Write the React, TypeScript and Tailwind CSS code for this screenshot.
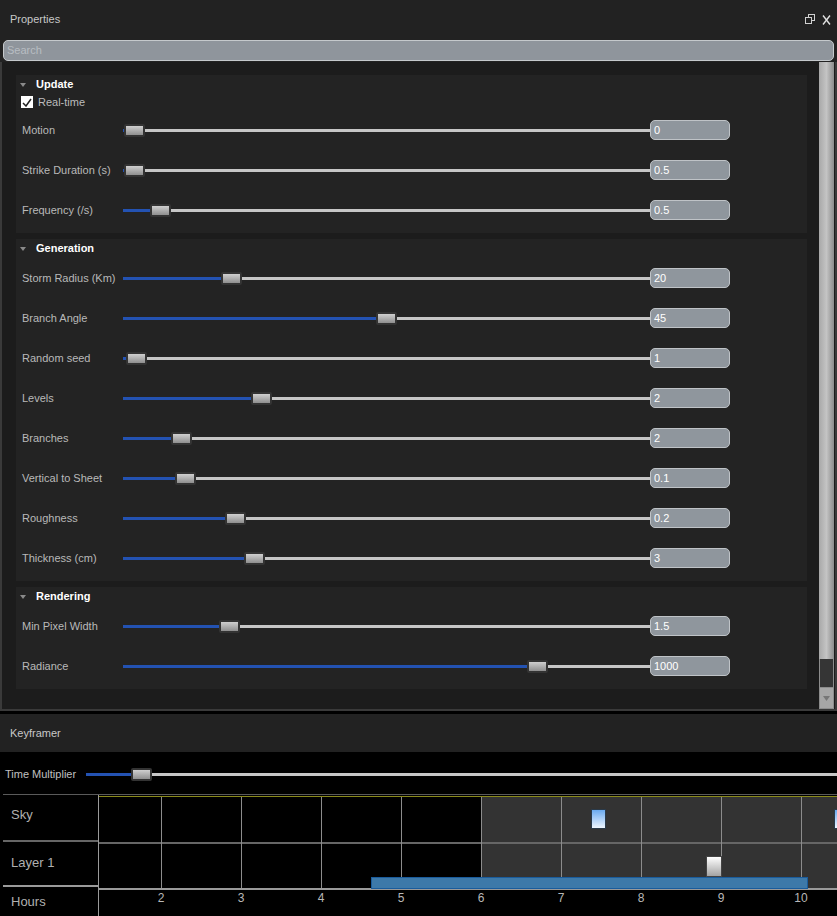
import React from "react";

// One slider row in the properties panel
interface Row {
  label: string;
  value: string;
  thumb: number; // left offset of the thumb in px
}

const updateRows: Row[] = [
  { label: "Motion", value: "0", thumb: 1 },
  { label: "Strike Duration (s)", value: "0.5", thumb: 1 },
  { label: "Frequency (/s)", value: "0.5", thumb: 27 },
];

const generationRows: Row[] = [
  { label: "Storm Radius (Km)", value: "20", thumb: 98 },
  { label: "Branch Angle", value: "45", thumb: 253 },
  { label: "Random seed", value: "1", thumb: 3 },
  { label: "Levels", value: "2", thumb: 128 },
  { label: "Branches", value: "2", thumb: 48 },
  { label: "Vertical to Sheet", value: "0.1", thumb: 52 },
  { label: "Roughness", value: "0.2", thumb: 102 },
  { label: "Thickness (cm)", value: "3", thumb: 121 },
];

const renderingRows: Row[] = [
  { label: "Min Pixel Width", value: "1.5", thumb: 96 },
  { label: "Radiance", value: "1000", thumb: 404 },
];

const hours = [2, 3, 4, 5, 6, 7, 8, 9, 10];

function Slider({ thumb, width }: { thumb: number; width: number }) {
  return (
    <div className="relative h-[13px] shrink-0" style={{ width }}>
      <div className="absolute left-0 right-0 top-[5px] h-[3px] bg-[#c6c6c6]" />
      <div
        className="absolute left-0 top-[5px] h-[3px] bg-[#2352b2]"
        style={{ width: thumb + 2 }}
      />
      <div
        className="absolute top-0 h-[13px] w-[21px] rounded-[2px] border-2 border-[#333] bg-gradient-to-b from-[#cfcfcf] to-[#8f8f8f]"
        style={{ left: thumb }}
      />
    </div>
  );
}

function SliderRow({ row }: { row: Row }) {
  return (
    <div className="h-[40px] flex items-center pl-[6px]">
      <div className="w-[101px] text-[11px] text-[#b9b9b9]">{row.label}</div>
      <Slider thumb={row.thumb} width={527} />
      <div className="w-[80px] h-[20px] rounded-[5px] bg-[#8f969d] border border-[#bfc3c7] flex items-center pl-[3px] text-[11px] text-white">
        {row.value}
      </div>
    </div>
  );
}

function Section({
  title,
  rows,
  children,
}: {
  title: string;
  rows: Row[];
  children?: React.ReactNode;
}) {
  return (
    <div className="bg-[#232323] pb-[3px]">
      <div className="h-[19px] flex items-center pl-[4px]">
        <svg width="6" height="4" viewBox="0 0 6 4" className="mr-[10px]">
          <path d="M0 0H6L3 4Z" fill="#8a8a8a" />
        </svg>
        <span className="text-[11px] font-bold text-white">{title}</span>
      </div>
      {children}
      {rows.map((r) => (
        <SliderRow key={r.label} row={r} />
      ))}
    </div>
  );
}

export default function App() {
  return (
    <div className="w-[837px] h-[916px] bg-black flex flex-col overflow-hidden font-['Liberation_Sans',Arial,sans-serif]">
      {/* Properties panel */}
      <div className="h-[711px] shrink-0 bg-[#222] flex flex-col">
        <div className="h-[39px] flex items-center px-[10px] text-[11px] text-[#c8c8c8]">
          <span className="flex-1">Properties</span>
          <svg width="11" height="11" viewBox="0 0 11 11" className="mr-[6px]">
            <rect x="3.5" y="0.5" width="6" height="6" fill="none" stroke="#d0d0d0" />
            <rect x="0.5" y="3.5" width="6" height="6" fill="#222" stroke="#d0d0d0" />
          </svg>
          <svg width="9" height="10" viewBox="0 0 9 10" className="mr-[-4px]">
            <path d="M1 0.5L8 9.5M8 0.5L1 9.5" stroke="#e0e0e0" strokeWidth="1.4" />
          </svg>
        </div>
        <div className="mx-[3px] mt-px h-[21px] rounded-[5px] bg-[#8f959c] border border-[#c5c9cc] flex items-center pl-[3px] text-[11px] text-[#b8bdc2]">
          Search
        </div>
        <div className="flex-1 flex bg-[#1c1c1c] border-x-2 border-b-2 border-[#3a3a3a] mt-px">
          <div className="flex-1 flex flex-col gap-[6px] pt-[13px] pl-[14px] pr-[12px]">
            <Section title="Update" rows={updateRows}>
              <div className="h-[16px] flex items-center pl-[5px] text-[11px] text-[#bcbcbc]">
                <div className="w-[12px] h-[12px] bg-white mr-[5px] flex items-center justify-center">
                  <svg width="10" height="9" viewBox="0 0 10 9">
                    <path d="M1 5L4 8L9 1" fill="none" stroke="#222" strokeWidth="1.5" />
                  </svg>
                </div>
                Real-time
              </div>
            </Section>
            <Section title="Generation" rows={generationRows} />
            <Section title="Rendering" rows={renderingRows} />
          </div>
          {/* Scrollbar */}
          <div className="w-[15px] flex flex-col mr-px">
            <div className="flex-1 bg-gradient-to-r from-[#a8a8a8] via-[#c4c4c4] to-[#8c8c8c]" />
            <div className="h-[28px] bg-[#353535] border-x border-[#8c8c8c]" />
            <div className="h-[22px] bg-[#a6a6a6] border border-[#8c8c8c] flex items-center justify-center">
              <svg width="7" height="5" viewBox="0 0 7 5">
                <path d="M0 0H7L3.5 5Z" fill="#777" />
              </svg>
            </div>
          </div>
        </div>
      </div>

      {/* Keyframer */}
      <div className="mt-[3px] h-[38px] shrink-0 bg-[#222] flex items-center px-[10px] text-[11px] text-[#c8c8c8]">
        Keyframer
      </div>
      <div className="flex-1 flex flex-col">
        <div className="h-[43px] flex items-center pt-[2px] pl-[2px] border-b border-[#5a5a5a] ml-[3px] overflow-hidden">
          <span className="w-[81px] shrink-0 text-[11px] text-[#c0c0c0]">Time Multiplier</span>
          <Slider thumb={45} width={760} />
        </div>
        <div className="flex-1 flex ml-[3px]">
          <div className="w-[96px] flex flex-col border-r border-[#9a9a9a] text-[13px] text-[#b0b0b0]">
            <div className="h-[47px] pl-[8px] pt-[10px] border-b-2 border-[#666]">Sky</div>
            <div className="h-[45px] pl-[8px] pt-[11px] border-b-2 border-[#9a9a9a]">Layer 1</div>
            <div className="flex-1 pl-[8px] pt-[5px]">Hours</div>
          </div>
          <div className="flex-1 flex flex-col">
            <div className="relative h-[94px] border-t border-[#8a8a1a] mt-px">
              <div className="absolute left-[382px] right-0 top-0 bottom-[2px] bg-[#333]" />
              <div className="absolute left-0 right-0 top-[45px] h-[2px] bg-[#666]" />
              <div className="absolute left-0 right-0 bottom-0 h-[2px] bg-[#9a9a9a]" />
              {hours.map((h) => (
                <div
                  key={h}
                  className="absolute top-0 bottom-[2px] w-px bg-[#8c8c8c]"
                  style={{ left: (h - 2) * 80 + 62 }}
                />
              ))}
              {/* Sky keys */}
              <div className="absolute left-[492px] top-[12px] w-[15px] h-[20px] border border-[#2a3a4a] bg-gradient-to-b from-[#6aa9ee] to-[#eef6ff]" />
              <div className="absolute left-[735px] top-[12px] w-[15px] h-[20px] border border-[#2a3a4a] bg-gradient-to-b from-[#6aa9ee] to-[#eef6ff]" />
              {/* Layer 1 key */}
              <div className="absolute left-[607px] top-[59px] w-[16px] h-[21px] border border-[#444] bg-gradient-to-b from-[#ffffff] to-[#a4a4a4]" />
              {/* Clip bar */}
              <div className="absolute left-[272px] w-[437px] top-[80px] h-[12px] bg-[#3d79a9] border border-[#1a5c9c]" />
            </div>
            <div className="relative flex-1 text-[12px] text-[#b8b8b8]">
              {hours.map((h) => (
                <span
                  key={h}
                  className="absolute top-[-1px] w-[20px] -ml-[10px] text-center"
                  style={{ left: (h - 2) * 80 + 62 }}
                >
                  {h}
                </span>
              ))}
            </div>
          </div>
        </div>
      </div>
    </div>
  );
}
